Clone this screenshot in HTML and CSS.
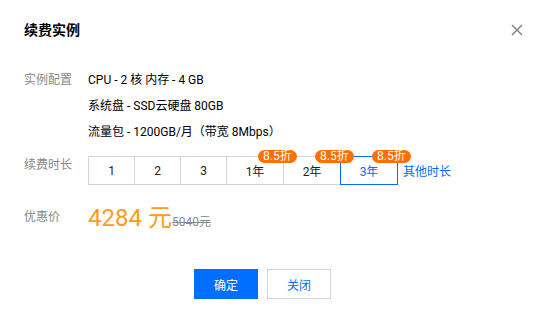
FILE: index.html
```html
<!DOCTYPE html>
<html lang="zh-CN">
  <head>
    <meta charset="UTF-8" />
    <meta name="viewport" content="width=device-width, initial-scale=1.0" />
    <title>续费实例</title>
    <link rel="stylesheet" href="styles.css">
  </head>
  <body>
    <div class="dialog">
      <div class="dialog-header">
        <h3 class="dialog-title">续费实例</h3>
        <button class="dialog-close" aria-label="关闭">
          <svg width="12" height="12" viewBox="0 0 12 12">
            <path d="M1 1 L11 11 M11 1 L1 11" stroke="#888" stroke-width="1.6" fill="none" />
          </svg>
        </button>
      </div>

      <div class="dialog-body">
        <div class="form-row">
          <div class="form-label">实例配置</div>
          <div class="form-value">
            <div class="config-line">CPU - 2 核 内存 - 4 GB</div>
            <div class="config-line">系统盘 - SSD云硬盘 80GB</div>
            <div class="config-line">流量包 - 1200GB/月（带宽 8Mbps）</div>
          </div>
        </div>

        <div class="form-row period-row">
          <div class="form-label">续费时长</div>
          <div class="form-value period">
            <div class="segment">
              <button class="segment-item">1</button>
              <button class="segment-item">2</button>
              <button class="segment-item">3</button>
              <button class="segment-item year">1年<span class="badge">8.5折</span></button>
              <button class="segment-item year">2年<span class="badge">8.5折</span></button>
              <button class="segment-item year active">3年<span class="badge">8.5折</span></button>
            </div>
            <a class="link" href="#">其他时长</a>
          </div>
        </div>

        <div class="form-row price-row">
          <div class="form-label">优惠价</div>
          <div class="form-value">
            <span class="price">4284 元</span><span class="price-origin">5040元</span>
          </div>
        </div>
      </div>

      <div class="dialog-footer">
        <button class="btn btn-primary">确定</button>
        <button class="btn btn-weak">关闭</button>
      </div>
    </div>
  </body>
</html>
```

FILE: styles.css
```css
body {
  margin: 0;
  font-family: Roboto, "Noto Sans CJK SC", sans-serif;
  font-size: 12px;
  color: #000;
  background: #fff;
}

button {
  font-family: inherit;
  font-size: 12px;
  cursor: pointer;
}

.dialog {
  width: 546px;
  height: 316px;
  box-sizing: border-box;
  padding: 20px 23px 0 24px;
}

.dialog-header {
  display: flex;
  justify-content: space-between;
  align-items: center;
  height: 20px;
}

.dialog-title {
  margin: 0;
  font-size: 14px;
  font-weight: bold;
  line-height: 20px;
}

.dialog-close {
  border: none;
  background: none;
  padding: 0;
  width: 12px;
  height: 12px;
  display: flex;
}

.dialog-body {
  margin-top: 27px;
}

.form-row {
  display: flex;
}

.form-label {
  width: 64px;
  flex-shrink: 0;
  color: #888;
  line-height: 26px;
}

.config-line {
  line-height: 26px;
}

/* 续费时长 */
.period-row {
  margin-top: 11px;
}

.period-row .form-label {
  line-height: 18px;
}

.period {
  display: flex;
  align-items: center;
}

.segment {
  display: flex;
}

.segment-item {
  position: relative;
  width: 47px;
  height: 29px;
  box-sizing: border-box;
  margin-left: -1px;
  padding: 0;
  border: 1px solid #cfd5de;
  background: #fff;
  color: #222;
}

.segment-item:first-child {
  margin-left: 0;
}

.segment-item.year {
  width: 58px;
}

.segment-item.active {
  border-color: #006eff;
  color: #006eff;
  z-index: 1;
}

.badge {
  position: absolute;
  z-index: 2;
  top: -7px;
  left: 31px;
  height: 13px;
  padding: 0 5px;
  border-radius: 7px;
  background: #ff6f00;
  color: #fff;
  font-size: 12px;
  line-height: 13px;
  white-space: nowrap;
}

.link {
  margin-left: 5px;
  color: #006eff;
  text-decoration: none;
}

/* 价格 */
.price-row {
  margin-top: 18px;
}

.price-row .form-label {
  padding-top: 5px;
  line-height: 18px;
}

.price-row .form-value {
  line-height: 30px;
}

.price {
  font-size: 24px;
  color: #ff9c19;
}

.price-origin {
  color: #888;
  text-decoration: line-through;
}

.dialog-footer {
  display: flex;
  justify-content: center;
  gap: 9px;
  margin-top: 32px;
  padding-right: 22px;
}

.btn {
  width: 64px;
  height: 30px;
  box-sizing: border-box;
  padding: 0;
}

.btn-primary {
  border: none;
  background: #006eff;
  color: #fff;
}

.btn-weak {
  border: 1px solid #cfd5de;
  background: #fff;
  color: #006eff;
}
```
